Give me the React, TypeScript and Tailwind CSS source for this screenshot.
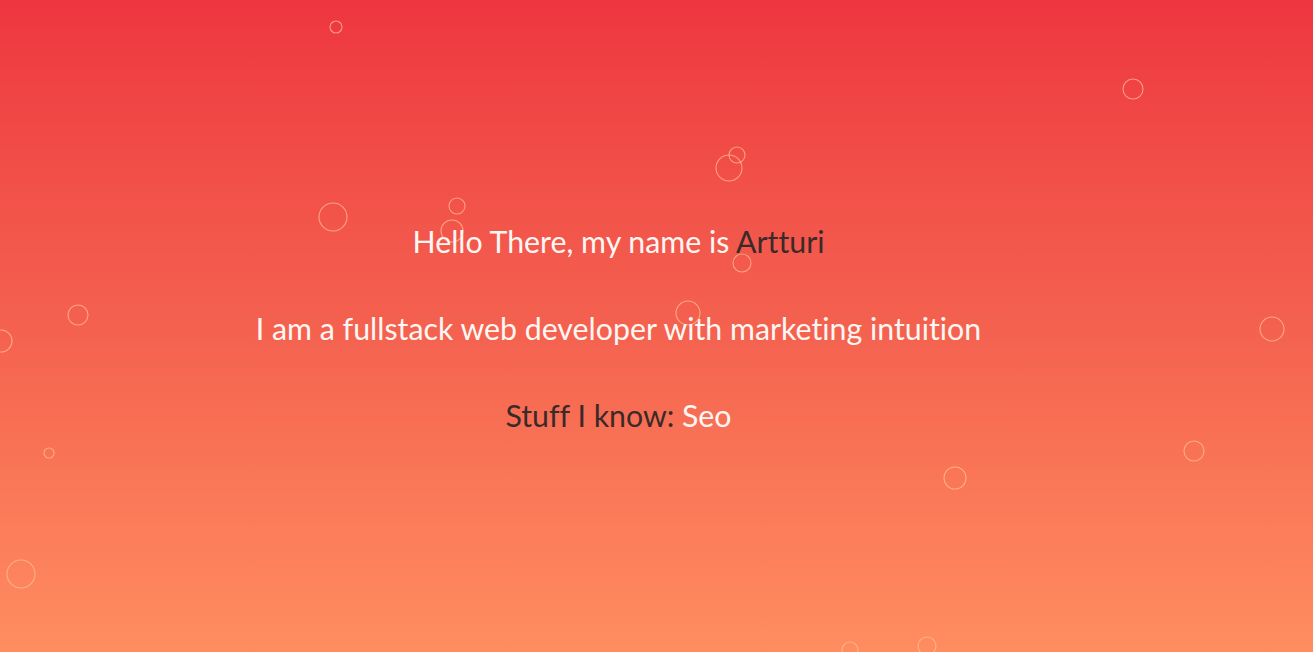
import React from "react";

const bubbles: [number, number, number][] = [
  [336, 27, 6],
  [1133, 89, 10],
  [737, 155, 8],
  [729, 168, 13],
  [333, 217, 14],
  [457, 206, 8],
  [452, 231, 11],
  [742, 263, 9],
  [78, 315, 10],
  [1, 341, 11],
  [688, 313, 12],
  [1272, 329, 12],
  [49, 453, 5],
  [1194, 451, 10],
  [955, 478, 11],
  [21, 574, 14],
  [850, 650, 8],
  [927, 646, 9],
];

export default function App() {
  return (
    <div className="relative h-[652px] w-full overflow-hidden bg-gradient-to-b from-[#ee3540] via-[#f4614f] to-[#ff8d60]">
      <svg className="absolute inset-0 h-full w-full" width="1313" height="652">
        {bubbles.map(([x, y, r], i) => (
          <circle key={i} cx={x} cy={y} r={r} fill="none" stroke="rgba(255,196,150,0.7)" strokeWidth="1.1" />
        ))}
      </svg>
      <div className="relative flex w-[1237px] flex-col items-center pt-[221px] text-[30.3px] leading-[40px] text-[#fff7f3] [font-family:Lato,'Open_Sans',sans-serif] [font-variant-ligatures:none]">
        <p>
          Hello There, my name is <span className="text-[#3a2a2a]">Artturi</span>
        </p>
        <p className="mt-[47px]">I am a fullstack web developer with marketing intuition</p>
        <p className="mt-[47px]">
          <span className="text-[#3a2a2a]">Stuff I know:</span> Seo
        </p>
      </div>
    </div>
  );
}
